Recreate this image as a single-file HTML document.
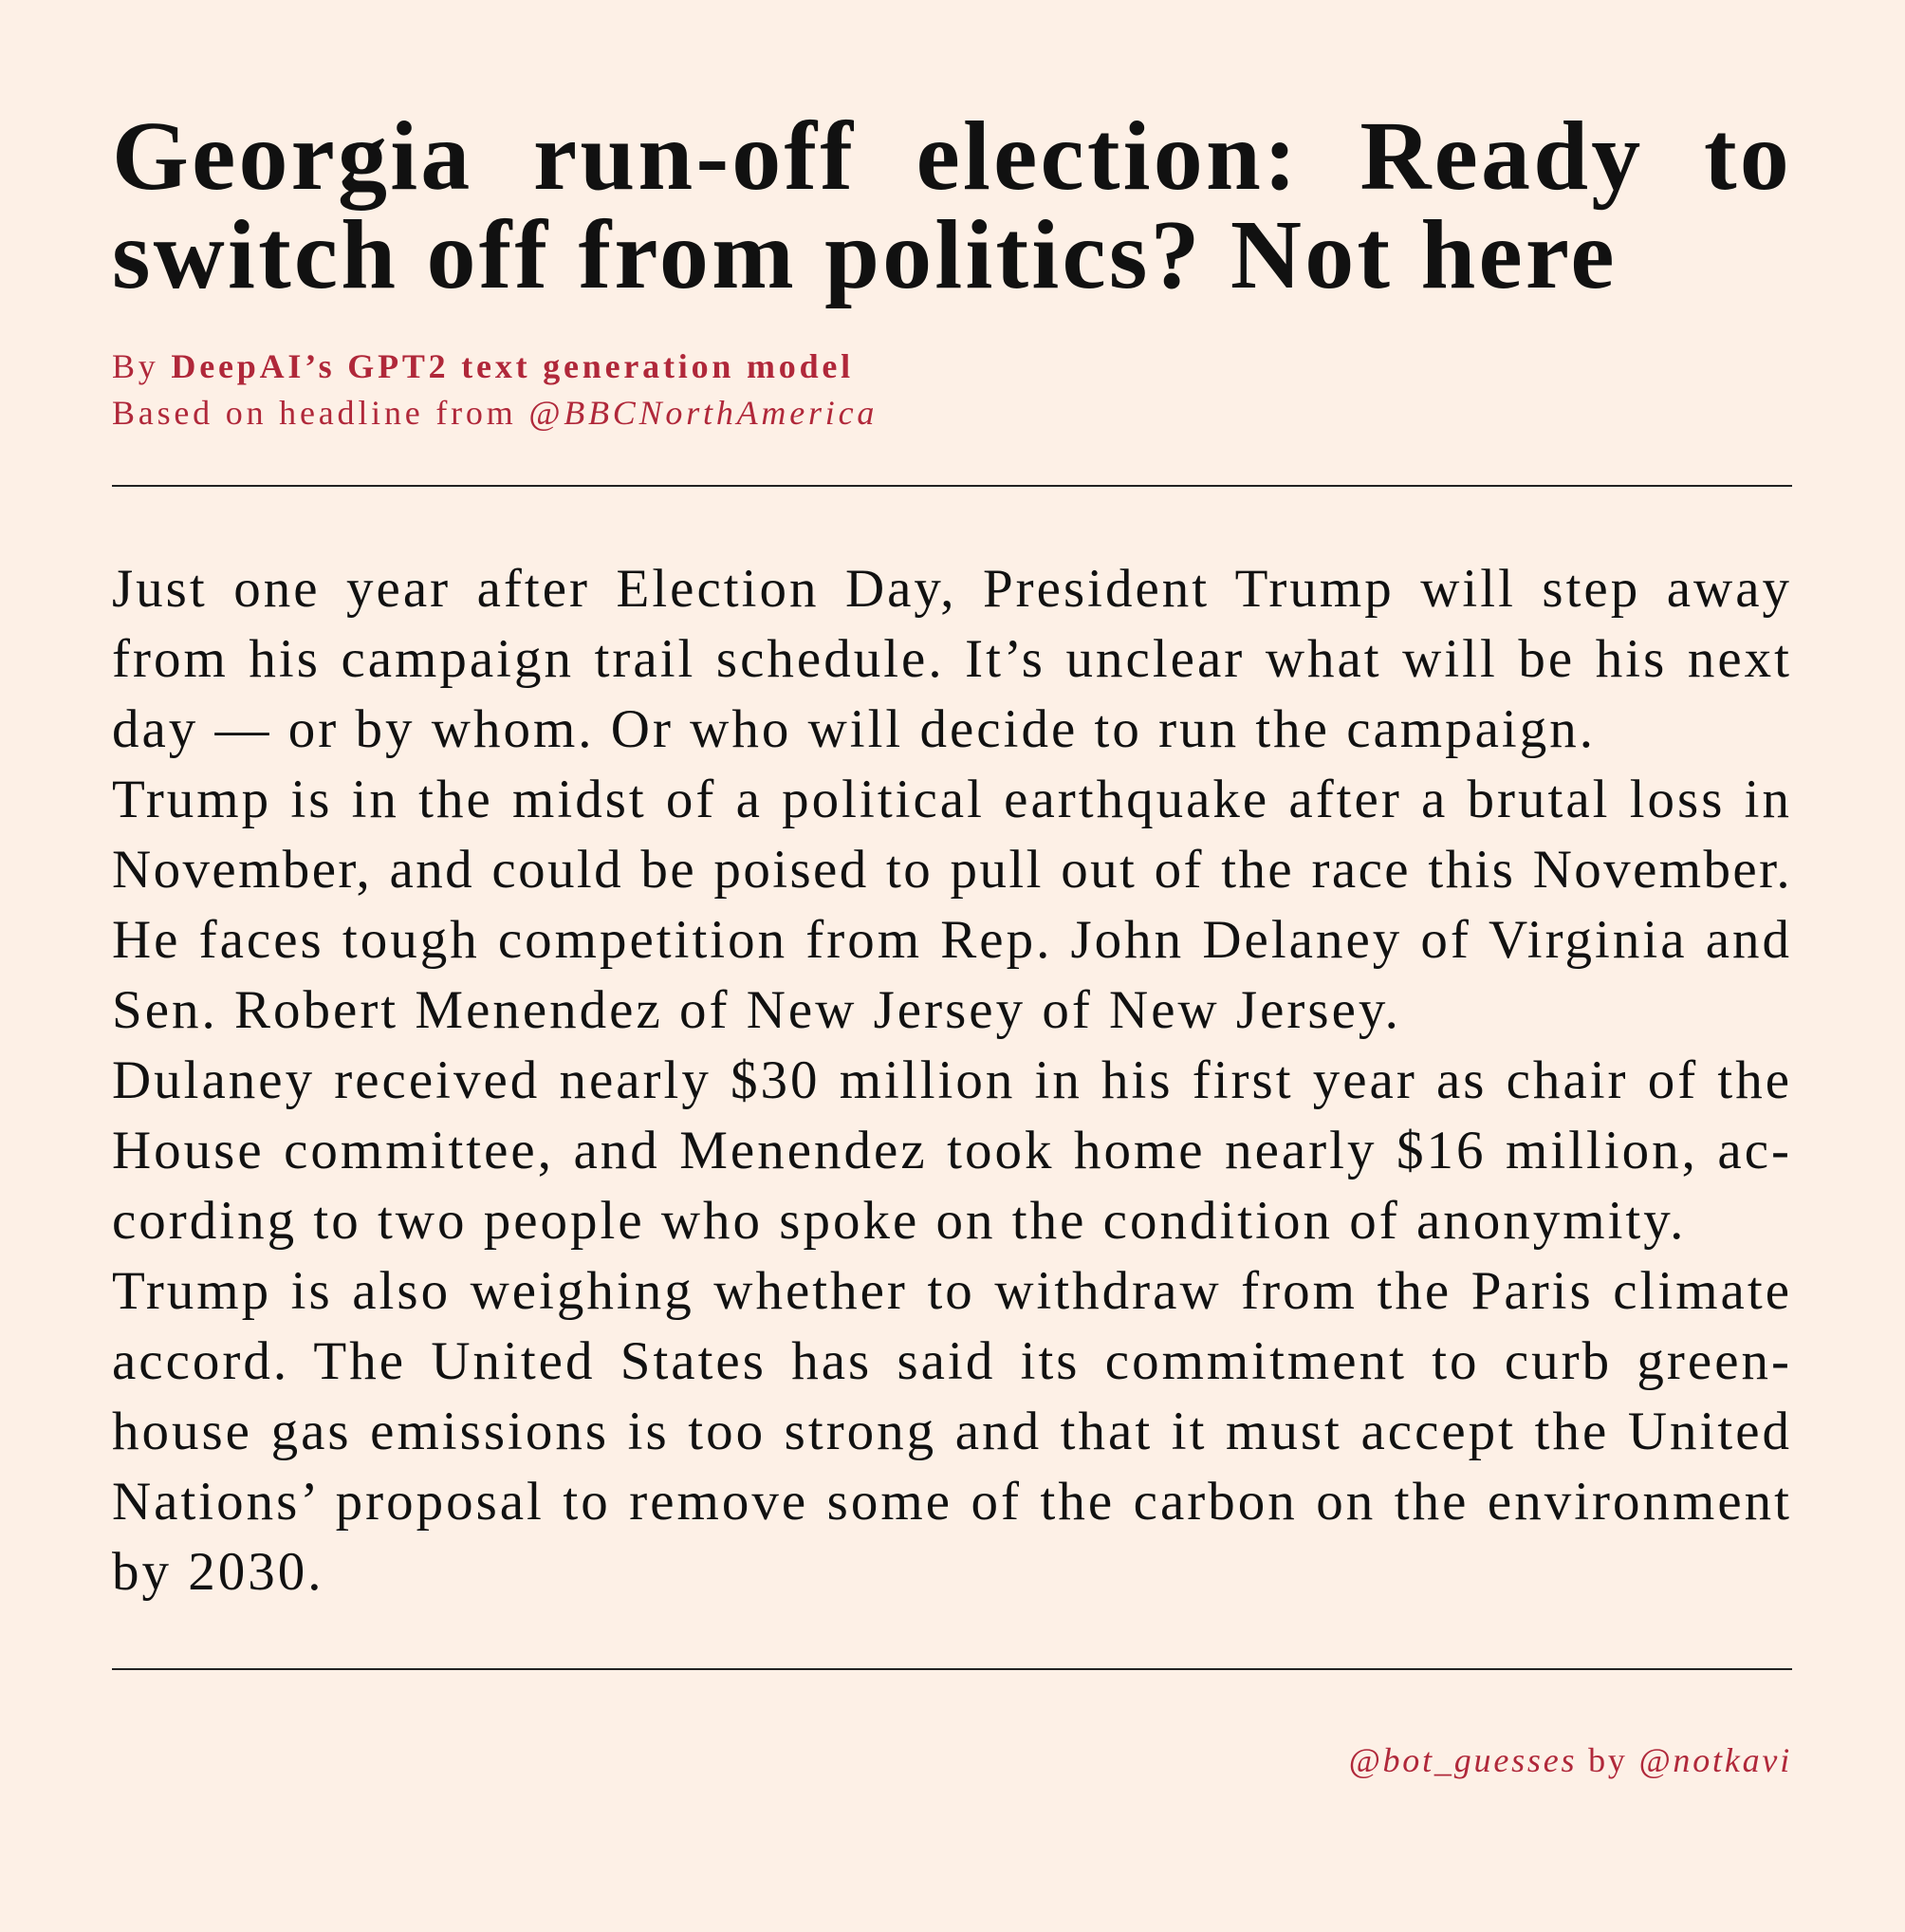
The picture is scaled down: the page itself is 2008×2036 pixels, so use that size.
<!DOCTYPE html>
<html><head><meta charset="utf-8"><style>
html,body{margin:0;padding:0;}
body{width:2008px;height:2036px;background:#fdf0e6;position:relative;font-family:"Liberation Serif",serif;color:#111;overflow:hidden;}
.j{text-align:justify;text-align-last:justify;white-space:nowrap;}
.l{text-align:left;white-space:nowrap;}
#title{position:absolute;left:118px;width:1771px;top:113px;font-size:104px;font-weight:bold;line-height:104px;letter-spacing:3.2px;}
#by{position:absolute;left:118px;top:362px;font-size:36px;line-height:49px;color:#b0283a;letter-spacing:3.8px;}
.rule{position:absolute;left:118px;width:1771px;height:2px;background:#222;}
#body{position:absolute;left:118px;width:1771px;top:584px;font-size:57px;line-height:74px;letter-spacing:3px;}
#foot{position:absolute;right:119px;top:1831px;font-size:36px;line-height:48px;color:#b0283a;letter-spacing:2.8px;}
i{font-style:italic;}
</style></head><body>
<div id="title"><div class="j">Georgia run-off election: Ready to</div><div class="l">switch off from politics? Not here</div></div>
<div id="by"><div>By <b>DeepAI’s GPT2 text generation model</b></div><div>Based on headline from <i>@BBCNorthAmerica</i></div></div>
<div class="rule" style="top:511px"></div>
<div id="body">
<div class="j">Just one year after Election Day, President Trump will step away</div>
<div class="j">from his campaign trail schedule. It’s unclear what will be his next</div>
<div class="l">day — or by whom. Or who will decide to run the campaign.</div>
<div class="j">Trump is in the midst of a political earthquake after a brutal loss in</div>
<div class="j" style="letter-spacing:2.4px">November, and could be poised to pull out of the race this November.</div>
<div class="j">He faces tough competition from Rep. John Delaney of Virginia and</div>
<div class="l">Sen. Robert Menendez of New Jersey of New Jersey.</div>
<div class="j">Dulaney received nearly $30 million in his first year as chair of the</div>
<div class="j">House committee, and Menendez took home nearly $16 million, ac-</div>
<div class="l">cording to two people who spoke on the condition of anonymity.</div>
<div class="j">Trump is also weighing whether to withdraw from the Paris climate</div>
<div class="j">accord. The United States has said its commitment to curb green-</div>
<div class="j">house gas emissions is too strong and that it must accept the United</div>
<div class="j">Nations’ proposal to remove some of the carbon on the environment</div>
<div class="l">by 2030.</div>
</div>
<div class="rule" style="top:1758px"></div>
<div id="foot"><i>@bot_guesses</i> by <i>@notkavi</i></div>
</body></html>
